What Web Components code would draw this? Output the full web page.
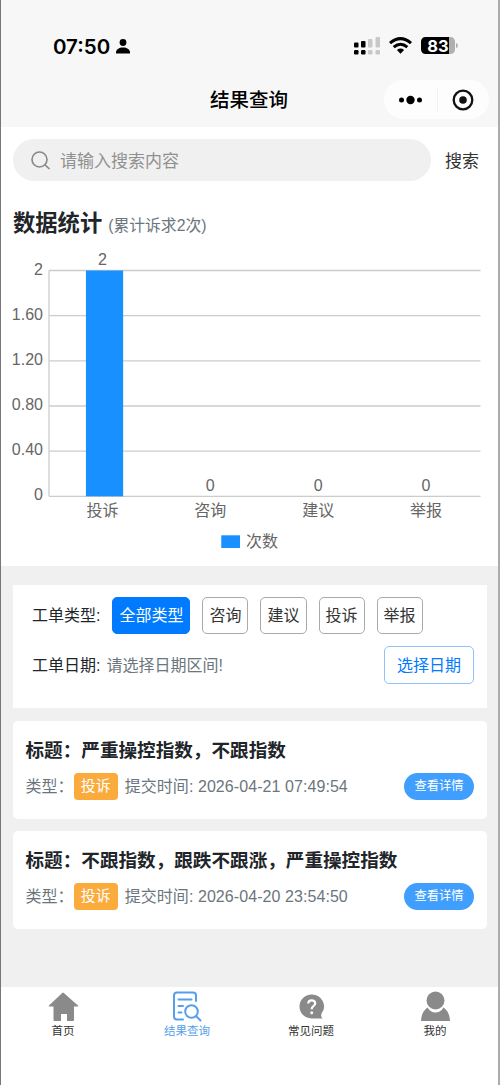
<!DOCTYPE html>
<html lang="zh-CN">
<head>
<meta charset="UTF-8">
<meta name="viewport" content="width=device-width, initial-scale=1.0">
<title>结果查询</title>
<style>
    body {
        margin: 0;
        background: #f0f0f0;
        font-family: "Liberation Sans", "Noto Sans CJK SC", sans-serif;
        font-size: 16px;
        color: #212529;
    }
</style>
</head>
<body>
<app-page>
    <status-bar slot="header" time="07:50" battery="83"></status-bar>
    <nav-bar slot="header">结果查询</nav-bar>

    <search-box placeholder="请输入搜索内容">搜索</search-box>
    <stat-panel>
        数据统计
        <span slot="note">(累计诉求2次)</span>
        <bar-chart slot="chart" labels="投诉,咨询,建议,举报" values="2,0,0,0" max="2" series="次数"></bar-chart>
    </stat-panel>

    <filter-panel>
        <filter-row label="工单类型:">
            <option-button active>全部类型</option-button>
            <option-button>咨询</option-button>
            <option-button>建议</option-button>
            <option-button>投诉</option-button>
            <option-button>举报</option-button>
        </filter-row>
        <filter-row label="工单日期:" hint="请选择日期区间!">
            <option-button outline>选择日期</option-button>
        </filter-row>
    </filter-panel>

    <ticket-card type="投诉" time="2026-04-21 07:49:54">严重操控指数，不跟指数</ticket-card>
    <ticket-card type="投诉" time="2026-04-20 23:54:50">不跟指数，跟跌不跟涨，严重操控指数</ticket-card>

    <tab-bar slot="footer">
        <tab-item icon="home">首页</tab-item>
        <tab-item icon="query" active>结果查询</tab-item>
        <tab-item icon="faq">常见问题</tab-item>
        <tab-item icon="user">我的</tab-item>
    </tab-bar>
</app-page>

<script>
class AppPage extends HTMLElement {
    constructor() {
        super();
        const shadow = this.attachShadow({ mode: 'open' });
        shadow.innerHTML = `
            <style>
            :host {
                display: flex;
                flex-direction: column;
                box-sizing: border-box;
                height: 1085px;
                border-left: 1px solid #77777a;
                border-right: 2px solid #acacae;
                overflow: hidden;
            }
            header { background: #f7f7f7; height: 127px; }
            main { flex: 1; }
            </style>
            <header><slot name="header"></slot></header>
            <main><slot></slot></main>
            <slot name="footer"></slot>
        `;
    }
}
customElements.define("app-page", AppPage);

class StatusBar extends HTMLElement {
    constructor() {
        super();
        const shadow = this.attachShadow({ mode: 'open' });
        shadow.innerHTML = `
            <style>
            :host {
                display: flex;
                justify-content: space-between;
                align-items: center;
                height: 73px;
                padding: 19px 40px 0 52px;
                box-sizing: border-box;
                color: #000;
            }
            .time {
                display: flex;
                align-items: center;
                gap: 6px;
                font: 600 20.5px/24px Inter, sans-serif;
            }
            .time span { padding-top: 1px; }
            .icons { display: flex; align-items: center; }
            svg { display: block; }
            </style>
            <div class="time">
                <span>${this.getAttribute("time")}</span>
                <svg width="14" height="15" viewBox="0 0 14 15"><circle cx="7" cy="3.5" r="3.4"/><path d="M0 14.5v-1C0 10.500 3 8.500 7 8.500s7 2 7 5v1z"/></svg>
            </div>
            <div class="icons">
                <svg width="104" height="20" viewBox="0 0 104 20">
                    <g fill="#000">
                        <rect x="0" y="6.500" width="4.500" height="5" rx="1"/>
                        <rect x="7" y="5" width="4.500" height="6.500" rx="1"/>
                        <rect x="0" y="14" width="4.500" height="4.500" rx="1.200"/>
                        <rect x="7" y="14" width="4.500" height="4.500" rx="1.200"/>
                    </g>
                    <g fill="#c8c8c8">
                        <rect x="14" y="3" width="4.500" height="8.500" rx="1"/>
                        <rect x="21.500" y="1" width="4.500" height="10.500" rx="1"/>
                        <rect x="14" y="14" width="4.500" height="4.500" rx="1.200"/>
                        <rect x="21.500" y="14" width="4.500" height="4.500" rx="1.200"/>
                    </g>
                    <g fill="none" stroke="#000" stroke-width="3">
                        <path d="M36 7.200Q46.500-2 57 7.200"/>
                        <path d="M39.700 11.200Q46.500 5.200 53.300 11.200"/>
                    </g>
                    <path d="M42.900 13.900q3.600-2.900 7.200 0L46.500 17.800z"/>
                    <path d="M95 1h1.500a4.500 4.500 0 0 1 4.500 4.500v8a4.500 4.500 0 0 1-4.500 4.500H95z" fill="#b0b0b0"/>
                    <path d="M102 7q2 .5 2 2.500t-2 2.500z" fill="#b0b0b0"/>
                    <path d="M71.500 1H95v17H71.500a4.500 4.500 0 0 1-4.500-4.500v-8a4.500 4.500 0 0 1 4.500-4.500z"/>
                    <text x="84" y="15.500" text-anchor="middle" fill="#fff" font-family="Inter, sans-serif" font-weight="700" font-size="16.500">${this.getAttribute("battery")}</text>
                </svg>
            </div>
        `;
    }
}
customElements.define("status-bar", StatusBar);

class NavBar extends HTMLElement {
    constructor() {
        super();
        const shadow = this.attachShadow({ mode: 'open' });
        shadow.innerHTML = `
            <style>
            :host {
                display: grid;
                grid-template-columns: 1fr auto 1fr;
                align-items: center;
                height: 53px;
                padding-right: 9px;
                padding-left: 8px;
            }
            .title { grid-column: 2; font-size: 19.5px; font-weight: 500; color: #000; line-height: 26px; }
            .capsule {
                justify-self: end;
                display: flex;
                align-items: center;
                justify-content: space-between;
                width: 105px;
                height: 39px;
                padding: 0 15px 0 14px;
                box-sizing: border-box;
                border-radius: 20px;
                background: #fdfdfd;
            }
            .capsule i { width: 1px; height: 24px; background: #f1f1f1; }
            </style>
            <div class="title"><slot></slot></div>
            <div class="capsule">
                <svg width="24" height="22" viewBox="0 0 24 22"><circle cx="3.500" cy="11" r="2.500"/><circle cx="12.500" cy="11" r="4.200"/><circle cx="21.500" cy="11" r="2.500"/></svg>
                <i></i>
                <svg width="22" height="22" viewBox="0 0 22 22"><circle cx="11" cy="11" r="9.300" fill="none" stroke="#111" stroke-width="2.300"/><circle cx="11" cy="11" r="3.800" fill="#111"/></svg>
            </div>
        `;
    }
}
customElements.define("nav-bar", NavBar);

class SearchBox extends HTMLElement {
    constructor() {
        super();
        const shadow = this.attachShadow({ mode: 'open' });
        shadow.innerHTML = `
            <style>
            :host {
                display: flex;
                align-items: center;
                gap: 14px;
                padding: 12px 19px 0 12px;
                background: #fff;
                font-size: 17px;
                color: #333;
            }
            .field {
                flex: 1;
                display: flex;
                align-items: center;
                gap: 9px;
                height: 42px;
                padding-left: 18px;
                border-radius: 21px;
                background: #f0f0f0;
                color: #909090;
            }
            span { padding-bottom: 2px; }
            svg { padding-top: 1px; }
            </style>
            <div class="field">
                <svg width="20" height="20" viewBox="0 0 20 20" fill="none" stroke="#888" stroke-width="1.600"><circle cx="8.500" cy="8.500" r="7.500"/><path d="M13.700 13.700l4.800 4.300"/></svg>
                <span>${this.getAttribute("placeholder")}</span>
            </div>
            <span><slot></slot></span>
        `;
    }
}
customElements.define("search-box", SearchBox);

class StatPanel extends HTMLElement {
    constructor() {
        super();
        const shadow = this.attachShadow({ mode: 'open' });
        shadow.innerHTML = `
            <style>
            :host { display: block; background: #fff; height: 385px; }
            .title {
                display: flex;
                align-items: baseline;
                gap: 6px;
                height: 64px;
                padding: 27px 12px 0;
                box-sizing: border-box;
                line-height: 32px;
            }
            b { font-size: 22.300px; }
            .note { color: #6c757d; font-size: 15.800px; }
            </style>
            <div class="title"><b><slot></slot></b><span class="note"><slot name="note"></slot></span></div>
            <slot name="chart"></slot>
        `;
    }
}
customElements.define("stat-panel", StatPanel);

class BarChart extends HTMLElement {
    constructor() {
        super();
        const shadow = this.attachShadow({ mode: 'open' });
        const labels = this.getAttribute("labels").split(",");
        const values = this.getAttribute("values").split(",").map(Number);
        const max = Number(this.getAttribute("max"));

        const left = 48, right = 479.5, top = 25.5, bottom = 251.3;
        const steps = 5;
        const col = (right - left) / labels.length;
        let out = "";

        // grid lines and y axis labels
        for (let i = 0; i <= steps; i++) {
            const y = top + (bottom - top) * i / steps;
            const value = max - max * i / steps;
            const text = Number.isInteger(value) ? value : value.toFixed(2);
            out += `<path class="line" d="M${left} ${y}H${right}"/>`;
            out += `<text x="42" y="${y + 4}" text-anchor="end">${text}</text>`;
        }
        out += `<path class="line" d="M${left} ${top}V${bottom}"/>`;

        labels.forEach((label, i) => {
            const x = left + col * (i + 0.5) - 0.5;
            const h = (bottom - top) * values[i] / max;
            if (h > 0) {
                out += `<rect x="${x - 16.5}" y="${bottom - h}" width="37.200" height="${h}" fill="#1890ff"/>`;
            }
            out += `<text x="${x}" y="${bottom - h - 5.5}" text-anchor="middle">${values[i]}</text>`;
            out += `<text x="${x}" y="${bottom + 20}" text-anchor="middle">${label}</text>`;
        });

        shadow.innerHTML = `
            <style>
            :host { display: block; }
            svg { display: block; }
            text { font-size: 16px; fill: #666; }
            .line { stroke: #ccc; stroke-width: 1.3; fill: none; }
            </style>
            <svg width="497" height="321" viewBox="0 0 497 321">
                ${out}
                <rect x="220.300" y="290.300" width="18.700" height="12.700" fill="#1890ff"/>
                <text x="245" y="301.500">${this.getAttribute("series")}</text>
            </svg>
        `;
    }
}
customElements.define("bar-chart", BarChart);

class FilterPanel extends HTMLElement {
    constructor() {
        super();
        const shadow = this.attachShadow({ mode: 'open' });
        shadow.innerHTML = `
            <style>
            :host {
                display: flex;
                flex-direction: column;
                gap: 12px;
                height: 123.500px;
                margin: 18.600px 11px 12.900px 12px;
                padding: 12px 13px 0 19px;
                box-sizing: border-box;
                background: #fff;
            }
            </style>
            <slot></slot>
        `;
    }
}
customElements.define("filter-panel", FilterPanel);

class FilterRow extends HTMLElement {
    constructor() {
        super();
        const shadow = this.attachShadow({ mode: 'open' });
        const hint = this.getAttribute("hint");
        shadow.innerHTML = `
            <style>
            :host { display: flex; align-items: center; height: 37.500px; }
            span { padding-bottom: 2px; }
            .hint { margin-left: 6px; color: #6c757d; flex: 1; }
            .options { display: flex; gap: 12px; margin-left: 12px; }
            </style>
            <span>${this.getAttribute("label")}</span>
            ${hint ? `<span class="hint">${hint}</span>` : ""}
            <div class="options"><slot></slot></div>
        `;
    }
}
customElements.define("filter-row", FilterRow);

class OptionButton extends HTMLElement {
    constructor() {
        super();
        const shadow = this.attachShadow({ mode: 'open' });
        shadow.innerHTML = `
            <style>
            :host {
                display: flex;
                align-items: center;
                height: 37.500px;
                padding: 0 6px 3px;
                box-sizing: border-box;
                border: 1px solid #aaa;
                border-radius: 5px;
                color: #333;
                cursor: pointer;
            }
            :host([active]) { background: #007bff; border-color: #007bff; color: #fff; }
            :host([outline]) { padding: 0 12px 2px; border-color: #8fc3fa; color: #007bff; }
            </style>
            <slot></slot>
        `;
    }
}
customElements.define("option-button", OptionButton);

class TicketCard extends HTMLElement {
    constructor() {
        super();
        const shadow = this.attachShadow({ mode: 'open' });
        shadow.innerHTML = `
            <style>
            :host {
                display: block;
                height: 98px;
                margin: 0 11px 12.400px 12px;
                padding: 16px 13px 0 12.500px;
                box-sizing: border-box;
                border-radius: 5px;
                background: #fff;
            }
            h3 { margin: 0 0 9px; font-size: 18.600px; line-height: 27px; font-weight: 700; }
            .row { display: flex; align-items: center; height: 27px; color: #6c757d; font-size: 16px; }
            .text { padding-bottom: 3px; }
            .time { letter-spacing: 0.07px; }
            .tag {
                margin-right: 6.500px;
                height: 27px;
                padding: 0 7.300px;
                border-radius: 4px;
                background: #fbab3c;
                color: #fff;
                font-size: 15px;
                line-height: 26px;
            }
            .more {
                margin-left: auto;
                width: 70px;
                text-align: center;
                border-radius: 14px;
                background: #409eff;
                color: #fff;
                font-size: 12.300px;
                line-height: 27px;
            }
            </style>
            <h3>标题：<slot></slot></h3>
            <div class="row">
                <span class="text">类型：</span>
                <span class="tag">${this.getAttribute("type")}</span>
                <span class="text time">提交时间: ${this.getAttribute("time")}</span>
                <span class="more">查看详情</span>
            </div>
        `;
    }
}
customElements.define("ticket-card", TicketCard);

class TabBar extends HTMLElement {
    constructor() {
        super();
        const shadow = this.attachShadow({ mode: 'open' });
        shadow.innerHTML = `
            <style>
            :host {
                display: grid;
                grid-template-columns: repeat(4, 1fr);
                height: 98px;
                padding-right: 1px;
                background: #fff;
            }
            </style>
            <slot></slot>
        `;
    }
}
customElements.define("tab-bar", TabBar);

const tabIcons = {
    home: `<path d="M15.500 1.700L30 14.500q.8 1-.5 1H26V29q0 1-1 1h-6v-7h-6v7H6.500q-1 0-1-1V15.500H1.500q-1.300 0-.5-1L14.500 1.700q.5-.4 1 0z" fill="#8a8a8a"/>`,
    query: `<g fill="none" stroke="#559fed" stroke-width="2" stroke-linecap="round">
        <path d="M11 28.500H5q-3 0-3-3V4.500q0-3 3-3h16q3 0 3 3V10"/>
        <path d="M6.500 8.500h13M6.500 15h4.500M6.500 21.500h3"/>
        <circle cx="19.500" cy="20.500" r="6.300"/><path d="M24 25l4.500 4.500"/></g>`,
    faq: `<path d="M15.500 3.500a12 12 0 1 0 0 24H26.500q-1.700-1.500-1.200-4.500A12 12 0 0 0 15.500 3.500z" fill="#8a8a8a"/>
        <path d="M12.200 12.500q.2-3.200 3.500-3.200t3.500 2.900q0 1.800-1.800 2.900-1.700 1-1.700 3.100" fill="none" stroke="#fff" stroke-width="2.200"/><circle cx="15.700" cy="21.700" r="1.500" fill="#fff"/>`,
    user: `<g fill="#8a8a8a"><circle cx="15.500" cy="9.500" r="9"/><path d="M7.500 16.500q3 5 8 5t8-5Q29.500 20.500 30 30H1Q1.500 20.500 7.500 16.500z"/></g>`
};

class TabItem extends HTMLElement {
    constructor() {
        super();
        const shadow = this.attachShadow({ mode: 'open' });
        shadow.innerHTML = `
            <style>
            :host {
                display: flex;
                flex-direction: column;
                align-items: center;
                padding-top: 4px;
                font-size: 11.500px;
                line-height: 17px;
                color: #333;
            }
            :host([active]) { color: #559fed; }
            svg { display: block; margin-bottom: 1px; }
            </style>
            <svg width="31" height="31" viewBox="0 0 31 31">${tabIcons[this.getAttribute("icon")]}</svg>
            <span><slot></slot></span>
        `;
    }
}
customElements.define("tab-item", TabItem);
</script>
</body>
</html>
